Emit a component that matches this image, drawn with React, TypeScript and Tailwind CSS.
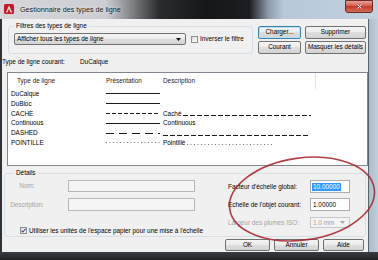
import { X } from 'lucide-react';

const btn =
  "flex h-[13px] items-center justify-center rounded-[2px] border border-[#707070] bg-[linear-gradient(#f4f4f4,#ececec_45%,#dedede_50%,#d3d3d3)] text-[6.4px] leading-none text-black";

const lineTypes = [
  { name: "DuCalque", dash: "", desc: "", descDash: "", descW: 0 },
  { name: "DuBloc", dash: "", desc: "", descDash: "", descW: 0 },
  { name: "CACHE", dash: "4 2", desc: "Caché", descDash: "5 2", descW: 128 },
  { name: "Continuous", dash: "", desc: "Continuous", descDash: "", descW: 0 },
  { name: "DASHED", dash: "8 5", desc: "", descDash: "5 2", descW: 145 },
  { name: "POINTILLE", dash: "1 2.5", desc: "Pointillé", descDash: "1 2.5", descW: 86 },
];

function Pattern({ w, dash, color = "#1c1c1c" }: { w: number; dash: string; color?: string }) {
  return (
    <svg width={w} height="3" className="block">
      <line x1="0" y1="1.5" x2={w} y2="1.5" stroke={color} strokeWidth="1" strokeDasharray={dash || undefined} />
    </svg>
  );
}

function Check({ checked }: { checked?: boolean }) {
  return (
    <div className="flex h-[7px] w-[7px] shrink-0 items-center justify-center border border-[#8e8f8f] bg-[linear-gradient(135deg,#dcdcdc,#fbfbfb)]">
      {checked && (
        <svg width="5" height="5" viewBox="0 0 5 5">
          <polyline points="0.5,2.6 1.9,4 4.6,0.8" fill="none" stroke="#3b4f75" strokeWidth="1.1" />
        </svg>
      )}
    </div>
  );
}

export default function App() {
  return (
    <div className="relative h-[260px] w-[378px] overflow-hidden bg-[#2a2c30] font-['Liberation_Sans',Arial,sans-serif] text-black">
      {/* title bar */}
      <div className="flex h-[19px] items-start bg-[linear-gradient(90deg,#d6d6da_0%,#cbcdd2_28%,#8a8c90_34%,#2b2c2f_42%,#151618_55%,#1d1e21_66%,#8e9ba9_71%,#b8c8d8_75%,#c3d1df_100%)]">
        <svg width="10" height="10" viewBox="0 0 10 10" className="ml-[4px] mt-[4px]">
          <rect x="0" y="0" width="10" height="10" rx="1.5" fill="#c41a25" />
          <polygon points="1.8,8.6 5,1.4 8.2,8.6 6.6,8.6 5,4.8 3.4,8.6" fill="#f6dede" />
        </svg>
        <span className="ml-[6px] mt-[4.5px] text-[7.2px] leading-[9px] text-[#1b1b1b] [text-shadow:0_0_4px_#ffffff]">
          Gestionnaire des types de ligne
        </span>
        <div className="ml-auto mr-[5px] flex h-[13px] w-[28px] items-center justify-center rounded-b-[3px] border border-[#6b2a2a] bg-[linear-gradient(#e9a294,#d05c4d_45%,#c23b2c_50%,#d56c56)]">
          <X size={7} strokeWidth={3} color="#ffffff" />
        </div>
      </div>

      <div className="flex h-[233px]">
        <div className="w-[2px] bg-[#2f3237]" />
        <div className="w-[366px] bg-[#f0f0f0] text-[6.4px] leading-[8px]">
          {/* filters + buttons */}
          <div className="flex items-start">
            <fieldset className="ml-[6px] mt-[3px] w-[245px] rounded-[3px] border border-[#d5dfe5] pb-[8px]">
              <legend className="ml-[5px] px-[2px] leading-[8px]">Filtres des types de ligne</legend>
              <div className="ml-[5px] mt-[3px] flex items-center">
                <div className="flex h-[12px] w-[172px] items-center justify-between rounded-[2px] border border-[#707070] bg-[linear-gradient(#f4f4f4,#ececec_45%,#dedede_50%,#d3d3d3)] pl-[2px] pr-[4px]">
                  <span>Afficher tous les types de ligne</span>
                  <svg width="5" height="3">
                    <polygon points="0,0 5,0 2.5,3" fill="#111" />
                  </svg>
                </div>
                <div className="ml-[5px]">
                  <Check />
                </div>
                <span className="ml-[2px]">Inverser le filtre</span>
              </div>
            </fieldset>
            <div className="ml-[5px] mt-[7px] grid grid-cols-[43px_61px] gap-x-[4px] gap-y-[2px]">
              <div className={`${btn} !border-[#3c7fb1] shadow-[inset_0_0_0_1px_#b9e1f7]`}>Charger...</div>
              <div className={btn}>Supprimer</div>
              <div className={btn}>Courant</div>
              <div className={btn}>Masquer les détails</div>
            </div>
          </div>

          <div className="mt-[4px] flex h-[8px] items-center">
            <span className="w-[78px]">Type de ligne courant:</span>
            <span>DuCalque</span>
          </div>

          {/* list */}
          <div className="ml-[5px] mt-[6px] h-[94px] w-[361px] border border-[#828790] bg-white">
            <div className="flex h-[16px] items-center text-[#1e1e1e]">
              <div className="w-[98px] pl-[9px]">Type de ligne</div>
              <div className="w-[57px]">Présentation</div>
              <div className="flex h-full w-[153px] items-center border-r border-[#e2e2e2]">Description</div>
            </div>
            {lineTypes.map((lt) => (
              <div key={lt.name} className="flex h-[9.8px] items-center leading-[9.8px]">
                <div className="w-[98px] pl-[3px]">{lt.name}</div>
                <div className="w-[57px]">
                  <Pattern w={54} dash={lt.dash} color={lt.name === "POINTILLE" ? "#777" : "#1c1c1c"} />
                </div>
                <div className="flex items-center">
                  {lt.desc && <span>{lt.desc}</span>}
                  {lt.descW > 0 && (
                    <div className={lt.desc ? "ml-[2px] mt-[4px]" : "mt-[4px]"}>
                      <Pattern w={lt.descW} dash={lt.descDash} color={lt.name === "POINTILLE" ? "#777" : "#1c1c1c"} />
                    </div>
                  )}
                </div>
              </div>
            ))}
          </div>

          {/* details */}
          <fieldset className="ml-[2px] mt-[3px] w-[362px] rounded-[3px] border border-[#d5dfe5] pb-[2px]">
            <legend className="ml-[9px] px-[2px] leading-[8px]">Détails</legend>
            <div className="flex">
              <div className="w-[200px]">
                <div className="mt-[3px] flex h-[12px] items-center">
                  <span className="w-[44px] text-center text-[#a3a3a3]">Nom:</span>
                  <div className="ml-[19px] h-[12px] w-[127px] border border-[#b4b8bd] bg-[#f5f5f5]" />
                </div>
                <div className="mt-[6px] flex h-[13px] items-center">
                  <span className="w-[44px] text-center text-[#a3a3a3]">Description:</span>
                  <div className="ml-[19px] h-[13px] w-[127px] border border-[#b4b8bd] bg-[#f5f5f5]" />
                </div>
                <div className="ml-[15px] mt-[16px] flex h-[7px] items-center whitespace-nowrap">
                  <Check checked />
                  <span className="ml-[2px]">Utiliser les unités de l'espace papier pour une mise à l'échelle</span>
                </div>
              </div>
              <div className="ml-[23px]">
                <div className="mt-[3px] flex h-[13px] items-center">
                  <span className="w-[82px]">Facteur d'échelle global:</span>
                  <div className="flex h-[13px] w-[40px] items-center border border-[#abadb3] bg-white pl-[1px]">
                    <span className="bg-[#3399ff] px-[1px] text-white">10.00000</span>
                  </div>
                </div>
                <div className="mt-[5px] flex h-[13px] items-center">
                  <span className="w-[82px]">Echelle de l'objet courant:</span>
                  <div className="flex h-[13px] w-[40px] items-center border border-[#abadb3] bg-white pl-[2px]">
                    1.00000
                  </div>
                </div>
                <div className="mt-[6px] flex h-[11px] items-center">
                  <span className="w-[82px] text-[#a3a3a3]">Largeur des plumes ISO:</span>
                  <div className="flex h-[11px] w-[40px] items-center justify-between border border-[#c6c8cc] bg-[#f4f4f4] pl-[2px] pr-[4px] text-[#a3a3a3]">
                    <span>1.0 mm</span>
                    <svg width="5" height="3">
                      <polygon points="0,0 5,0 2.5,3" fill="#a8a8a8" />
                    </svg>
                  </div>
                </div>
              </div>
            </div>
          </fieldset>

          <div className="mt-[2px] flex justify-end gap-[4px] pr-[4px]">
            <div className={`${btn} !h-[12px] w-[45px]`}>OK</div>
            <div className={`${btn} !h-[12px] w-[45px]`}>Annuler</div>
            <div className={`${btn} !h-[12px] w-[41px]`}>Aide</div>
          </div>
        </div>
        <div className="w-[10px] border-l border-[#59636e] bg-[linear-gradient(90deg,#aebdcc,#c0cedb)]" />
      </div>
      <div className="h-[8px] bg-[linear-gradient(#3a3d42,#1f2023)]" />

      {/* red annotation ellipse */}
      <svg width="378" height="260" className="pointer-events-none absolute inset-0">
        <ellipse
          cx="302"
          cy="199"
          rx="73"
          ry="41"
          transform="rotate(-8 302 199)"
          fill="none"
          stroke="#a61e28"
          strokeWidth="1.6"
          opacity="0.85"
        />
      </svg>
    </div>
  );
}
